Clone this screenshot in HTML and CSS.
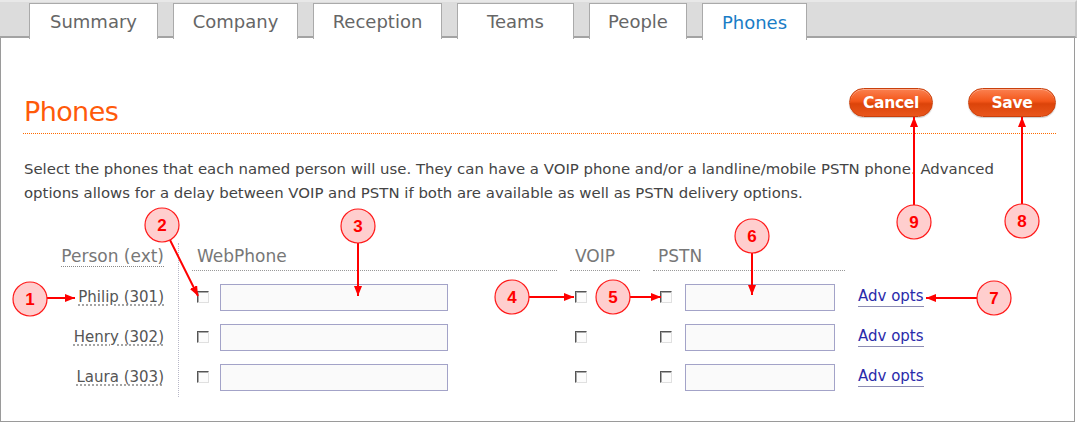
FILE: index.html
```html
<!DOCTYPE html>
<html lang="en">
<head>
  <meta charset="UTF-8">
  <title>Phones</title>
  <link rel="stylesheet" href="styles.css">
</head>
<body>
  <div class="tabs">
    <a class="tab tab-summary" href="#">Summary</a>
    <a class="tab tab-company" href="#">Company</a>
    <a class="tab tab-reception" href="#">Reception</a>
    <a class="tab tab-teams" href="#">Teams</a>
    <a class="tab tab-people" href="#">People</a>
    <a class="tab tab-phones active" href="#">Phones</a>
  </div>

  <div class="panel">
    <div class="head">
      <h1>Phones</h1>
      <div class="buttons">
        <button class="btn btn-cancel">Cancel</button>
        <button class="btn btn-save">Save</button>
      </div>
    </div>

    <p class="intro">Select the phones that each named person will use. They can have a VOIP phone and/or a landline/mobile PSTN phone. Advanced options allows for a delay between VOIP and PSTN if both are available as well as PSTN delivery options.</p>

    <div class="phones">
      <div class="names">
        <div class="name-head"><span>Person (ext)</span></div>
        <div class="name"><span>Philip (301)</span></div>
        <div class="name"><span>Henry (302)</span></div>
        <div class="name"><span>Laura (303)</span></div>
      </div>

      <div class="fields">
        <div class="col-head">WebPhone</div>
        <div class="col-head">VOIP</div>
        <div class="col-head">PSTN</div>
        <div></div>

        <div class="cell cell-web"><span class="check"></span><span class="field field-web"></span></div>
        <div class="cell cell-voip"><span class="check"></span></div>
        <div class="cell cell-pstn"><span class="check"></span><span class="field field-pstn"></span></div>
        <div class="cell"><a class="adv" href="#">Adv opts</a></div>

        <div class="cell cell-web"><span class="check"></span><span class="field field-web"></span></div>
        <div class="cell cell-voip"><span class="check"></span></div>
        <div class="cell cell-pstn"><span class="check"></span><span class="field field-pstn"></span></div>
        <div class="cell"><a class="adv" href="#">Adv opts</a></div>

        <div class="cell cell-web"><span class="check"></span><span class="field field-web"></span></div>
        <div class="cell cell-voip"><span class="check"></span></div>
        <div class="cell cell-pstn"><span class="check"></span><span class="field field-pstn"></span></div>
        <div class="cell"><a class="adv" href="#">Adv opts</a></div>
      </div>
    </div>
  </div>

  <!-- numbered callouts drawn over the screen -->
  <svg class="callouts" width="1077" height="425" viewBox="0 0 1077 425">
    <defs>
      <marker id="tip" markerWidth="10" markerHeight="8" refX="10" refY="4" orient="auto" markerUnits="userSpaceOnUse">
        <path d="M0,0 L10,4 L0,8 Z" fill="#ff0000"/>
      </marker>
    </defs>
    <g class="arrows">
      <line x1="47" y1="298" x2="75" y2="298"/>
      <line x1="170" y1="240" x2="198" y2="296"/>
      <line x1="358" y1="243" x2="358" y2="296"/>
      <line x1="529" y1="297" x2="574" y2="297"/>
      <line x1="630" y1="297" x2="661" y2="297"/>
      <line x1="752" y1="253" x2="752" y2="295"/>
      <line x1="977" y1="298" x2="926" y2="298"/>
      <line x1="1022" y1="204" x2="1022" y2="117"/>
      <line x1="914" y1="205" x2="914" y2="117"/>
    </g>
    <g class="dots">
      <circle cx="30" cy="299" r="17"/>
      <circle cx="162" cy="225" r="17"/>
      <circle cx="358" cy="226" r="17"/>
      <circle cx="512" cy="297" r="17"/>
      <circle cx="613" cy="297" r="17"/>
      <circle cx="752" cy="236" r="17"/>
      <circle cx="994" cy="298" r="17"/>
      <circle cx="1022" cy="221" r="17"/>
      <circle cx="914" cy="222" r="17"/>
    </g>
    <g class="nums">
      <text x="30" y="305">1</text>
      <text x="162" y="231">2</text>
      <text x="358" y="232">3</text>
      <text x="512" y="303">4</text>
      <text x="613" y="303">5</text>
      <text x="752" y="242">6</text>
      <text x="994" y="304">7</text>
      <text x="1022" y="227">8</text>
      <text x="914" y="228">9</text>
    </g>
  </svg>
</body>
</html>
```

FILE: styles.css
```css
body { margin: 0; position: relative; width: 1077px; height: 425px; background: #fff; font-family: "DejaVu Sans", Verdana, sans-serif; overflow: hidden; }

/* tab strip */
.tabs { display: flex; gap: 15px; height: 38px; box-sizing: border-box; padding: 1px 0 0 29px; background: #dcdcdc; border-top: 2px solid #e8e8e8; border-bottom: 2px solid #a3a3a3; border-right: 2px solid #c8c8c8; align-items: stretch; }
.tab { display: flex; align-items: center; justify-content: center; box-sizing: border-box; height: 36px; padding: 0 4px; margin-bottom: -1px; background: #fff; border: 1px solid #aaa; border-bottom: none; color: #666; font-size: 18px; text-decoration: none; }
.tab-summary { width: 129px; }
.tab-company { width: 125px; }
.tab-reception { width: 129px; }
.tab-teams { width: 117px; }
.tab-people { width: 98px; }
.tab-phones { width: 105px; }
.tab.active { color: #1a7dc6; height: 37px; margin-bottom: -2px; }

/* content panel */
.panel { height: 384px; box-sizing: border-box; border: 1px solid #9a9a9a; border-top: none; margin-right: 2px; padding: 50px 18px 0 22px; }

.head { display: flex; justify-content: space-between; align-items: flex-start; height: 46px; box-sizing: border-box; border-bottom: 1px dotted #ff6a00; }
.head h1 { margin: 9px 0 0 1px; font-size: 27px; line-height: 30px; font-weight: normal; color: #ff5a0a; letter-spacing: -0.6px; }
.buttons { display: flex; gap: 35px; }
.btn { height: 29px; border-radius: 15px; border: 1px solid #c9400c; background: linear-gradient(#fb8150 0%, #f3561a 45%, #dc440a 55%, #e9561c 100%); box-shadow: inset 0 1px 0 rgba(255,255,255,0.35), 0 1px 1px rgba(0,0,0,0.2); color: #fff; font-family: "DejaVu Sans", Verdana, sans-serif; font-weight: bold; font-size: 15.5px; letter-spacing: -0.3px; padding: 0; cursor: pointer; }
.btn-cancel { width: 84px; }
.btn-save { width: 88px; }

.intro { margin: 23px 0 0 1px; font-size: 14.9px; line-height: 24px; color: #444; width: 1000px; }

/* phones grid */
.phones { display: flex; margin-top: 38px; padding-bottom: 8px; }
.names { width: 141px; padding-right: 14px; border-right: 1px dotted #b8b8c8; text-align: right; color: #555; font-size: 15px; }
.name-head { height: 28px; line-height: 27px; margin-bottom: 6px; font-size: 17px; color: #777; }
.name-head span { border-bottom: 1px dotted #888; }
.name { height: 40px; line-height: 40px; }
.name span { text-decoration: underline dotted #888; text-underline-offset: 3px; }

.fields { display: grid; grid-template-columns: 365px 70px 192px auto; grid-template-rows: 34px 40px 40px 40px; column-gap: 13px; padding-left: 13px; }
.col-head { height: 28px; line-height: 27px; box-sizing: border-box; border-bottom: 1px dotted #999; font-size: 17px; color: #777; padding-left: 5px; }

.cell { display: flex; align-items: center; }
.check { width: 10px; height: 10px; border: 1px solid; border-color: #555 #e0e0e0 #e0e0e0 #555; background: #fcfcfc; box-shadow: inset 1px 1px 0 #aaa; }
.cell-web .check { margin-left: 5px; }
.cell-voip .check { margin-left: 5px; }
.cell-pstn .check { margin-left: 7px; }
.field { height: 27px; box-sizing: border-box; border: 1px solid #a3a3c8; background: #fafafa; }
.field-web { width: 228px; margin-left: 11px; }
.field-pstn { width: 150px; margin-left: 13px; }
.adv { color: #2a2aaa; font-size: 15px; text-decoration: none; border-bottom: 1px solid #8c8cb4; padding-bottom: 1px; }

/* callouts */
.callouts { position: absolute; left: 0; top: 0; pointer-events: none; }
.arrows line { stroke: #ff0000; stroke-width: 2; marker-end: url(#tip); }
.dots circle { fill: #ffcece; stroke: #ff1a1a; stroke-width: 1.2; }
.nums text { fill: #ff0000; font-family: "Liberation Sans", Arial, sans-serif; font-weight: bold; font-size: 17px; text-anchor: middle; }
```
